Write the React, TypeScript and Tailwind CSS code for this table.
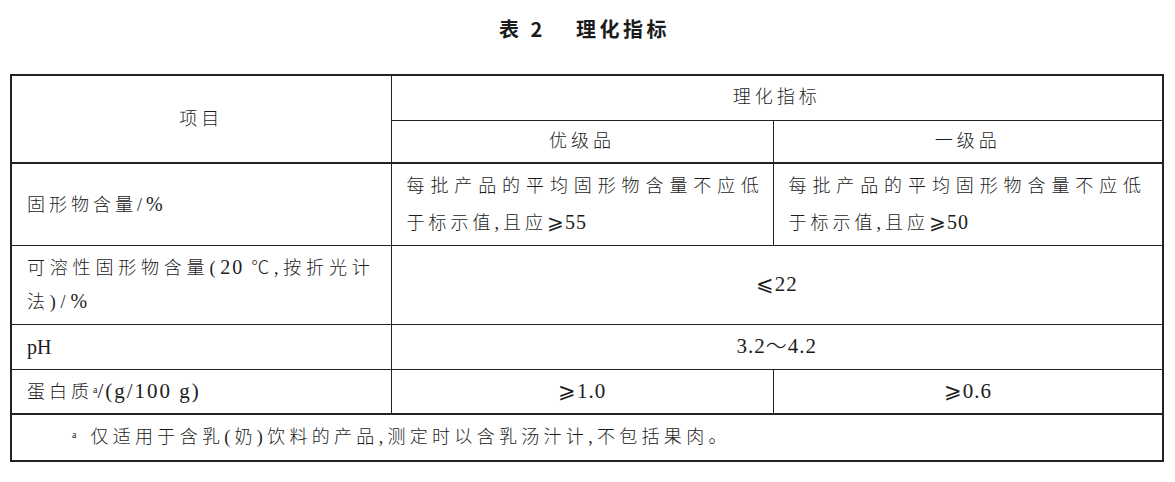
import React from 'react';

const serif = "font-['Liberation_Serif','Noto_Sans_CJK_SC',serif]";

const App = () => {
  return (
    <div className={`w-[1175px] h-[482px] bg-white text-[#1c1c1c] ${serif}`}>
      {/* Title */}
      <div className="h-[74px] pt-[15px] text-center">
        <h2 className="text-[20px] leading-[28px] font-bold tracking-[3.5px] font-['Noto_Sans_CJK_SC',sans-serif] pr-[6px]">
          表 2<span className="inline-block w-[30px]" />理化指标
        </h2>
      </div>

      {/* Table */}
      <table className="ml-[10px] w-[1152px] table-fixed border-collapse border-2 border-[#222] text-[18px] font-light">
        <colgroup>
          <col className="w-[380px]" />
          <col className="w-[382px]" />
          <col className="w-[390px]" />
        </colgroup>
        <tbody>
          <tr className="h-[45px]">
            <td rowSpan={2} className="border border-[#222] border-b-2 text-center tracking-[4px]">
              项目
            </td>
            <td colSpan={2} className="border border-[#222] text-center tracking-[4px]">
              理化指标
            </td>
          </tr>
          <tr className="h-[43px]">
            <td className="border border-[#222] border-b-2 text-center tracking-[4px]">优级品</td>
            <td className="border border-[#222] border-b-2 text-center tracking-[4px]">一级品</td>
          </tr>

          <tr className="h-[82px]">
            <td className="border border-[#222] border-t-2 px-[15px] tracking-[4px]">
              固形物含量/<span className="text-[20px]">%</span>
            </td>
            <td className="border border-[#222] border-t-2 px-[15px] leading-[36px] tracking-[5.9px] whitespace-nowrap">
              每批产品的平均固形物含量不应低
              <br />
              <span className="tracking-[4px]">
                于标示值,且应<span className="text-[20px] tracking-[1px]">⩾55</span>
              </span>
            </td>
            <td className="border border-[#222] border-t-2 px-[15px] leading-[36px] tracking-[5.9px] whitespace-nowrap">
              每批产品的平均固形物含量不应低
              <br />
              <span className="tracking-[4px]">
                于标示值,且应<span className="text-[20px] tracking-[1px]">⩾50</span>
              </span>
            </td>
          </tr>

          <tr className="h-[79px]">
            <td className="border border-[#222] px-[15px] leading-[33px] tracking-[4.8px] whitespace-nowrap">
              可溶性固形物含量(<span className="text-[20px] tracking-[2px]">20 </span>℃,按折光计
              <br />
              法)/<span className="text-[20px]">%</span>
            </td>
            <td colSpan={2} className="border border-[#222] text-center text-[21px] tracking-[1px]">⩽22</td>
          </tr>

          <tr className="h-[45px]">
            <td className="border border-[#222] px-[15px] text-[20px]">pH</td>
            <td colSpan={2} className="border border-[#222] text-center text-[21px] tracking-[1px]">3.2～4.2</td>
          </tr>

          <tr className="h-[45px]">
            <td className="border border-[#222] border-b-2 px-[15px] tracking-[4px]">
              蛋白质<sup className="text-[10px] tracking-normal">a</sup>
              <span className="text-[21px] tracking-[2px]">/(g/100 g)</span>
            </td>
            <td className="border border-[#222] border-b-2 text-center text-[21px] tracking-[1px]">⩾1.0</td>
            <td className="border border-[#222] border-b-2 text-center text-[21px] tracking-[1px]">⩾0.6</td>
          </tr>

          <tr className="h-[47px]">
            <td colSpan={3} className="border border-[#222] border-t-2 pl-[60px] tracking-[4.3px]">
              <sup className="text-[10px] tracking-normal mr-[14px]">a</sup>
              仅适用于含乳(奶)饮料的产品,测定时以含乳汤汁计,不包括果肉。
            </td>
          </tr>
        </tbody>
      </table>
    </div>
  );
};

export default App;
